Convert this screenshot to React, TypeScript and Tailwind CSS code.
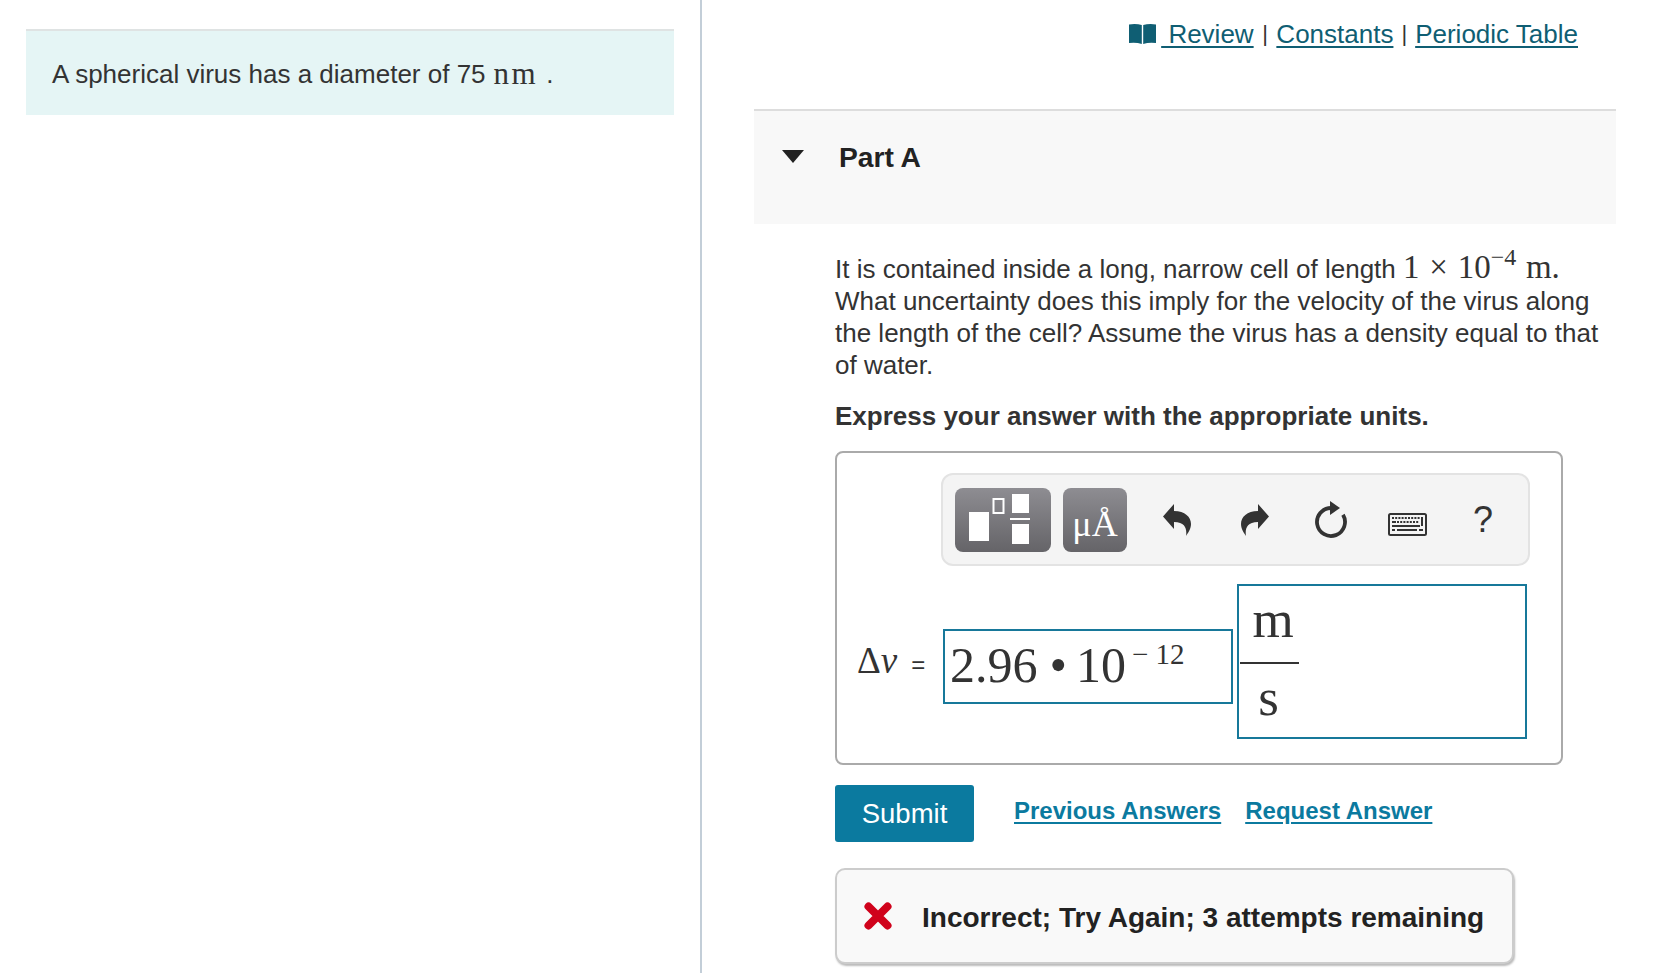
import React from "react";

const sans = "font-['Liberation_Sans',Arial,sans-serif]";
const serif = "font-['Liberation_Serif','Times_New_Roman',serif]";

function FractionIcon() {
  return (
    <svg width="64" height="50" viewBox="0 0 64 50" fill="white" className="mb-[2px] mr-[4px]">
      <rect x="0" y="18" width="20" height="29" />
      <rect x="24.5" y="5" width="10" height="14" fill="none" stroke="white" strokeWidth="2" />
      <rect x="43" y="0" width="17" height="19" />
      <rect x="41" y="24" width="20" height="2" />
      <rect x="43" y="30" width="17" height="20" />
    </svg>
  );
}

function Arrow({ flip }: { flip?: boolean }) {
  return (
    <svg width="28" height="32" viewBox="0 0 28 32" fill="#333" className={flip ? "-scale-x-100" : ""}>
      <path d="M0 12.5 L11 0 V7 C22 7 28 13 28 20 C28 25 25 29 23 32 C24 26 23 18 11 18 V25 Z" />
    </svg>
  );
}

function Reload() {
  return (
    <svg width="34" height="38" viewBox="0 0 34 38" fill="none">
      <path d="M17 7 A14 14 0 1 0 29 13.8" stroke="#333" strokeWidth="3.8" />
      <path d="M16 0 L26 7 L16 14 Z" fill="#333" />
    </svg>
  );
}

function Keyboard() {
  const dots: React.ReactNode[] = [];
  for (let i = 0; i < 9; i++) {
    dots.push(<rect key={"a" + i} x={4 + i * 3.2} y={4} width="2" height="2" fill="#333" />);
  }
  for (let i = 0; i < 7; i++) {
    dots.push(<rect key={"b" + i} x={9 + i * 3.2} y={8} width="2" height="2" fill="#333" />);
  }
  return (
    <svg width="39" height="23" viewBox="0 0 39 23" fill="none">
      <rect x="1" y="1" width="37" height="21" rx="1.5" stroke="#333" strokeWidth="2" />
      {dots}
      <rect x="4" y="8" width="4" height="2" fill="#333" />
      <rect x="33" y="4" width="2" height="9" fill="#333" />
      <rect x="4" y="12" width="28" height="2" fill="#333" />
      <rect x="4" y="16" width="3" height="2" fill="#333" />
      <rect x="9" y="16" width="20" height="2" fill="#333" />
      <rect x="31" y="16" width="4" height="2" fill="#333" />
    </svg>
  );
}

function Book() {
  return (
    <svg width="27" height="20" viewBox="0 0 27 20" fill="#0f5e73">
      <path d="M0 0.5 Q7 -0.5 12.8 1 V20 Q7 18 0 19 Z" />
      <path d="M14.2 1 Q20 -0.5 27 0.5 V19 Q20 18 14.2 20 Z" />
    </svg>
  );
}

export default function App() {
  return (
    <div className={`${sans} flex h-[973px] w-[1668px] overflow-hidden bg-white text-[#333]`}>
      <div className="h-full w-[702px] shrink-0 border-r-2 border-[#c3ced8] pl-[26px] pt-[29px]">
        <div className="flex h-[86px] w-[648px] items-center border-t-2 border-[#dfe3e3] bg-[#e5f5f5] pl-[26px] pt-[2px] text-[26px]">
          <span>A spherical virus has a diameter of 75</span>
          <span className={`${serif} ml-[8px] text-[31px] tracking-[2.5px]`}>nm</span>
          <span className="ml-[8px]">.</span>
        </div>
      </div>

      <div className="w-[966px] pl-[52px]">
        <div className="flex h-[109px] w-[824px] items-start justify-end pt-[16px] text-[26px] leading-[36px]">
          <span className="mr-[5px] mt-[8px]"><Book /></span>
          <a className="text-[#0f5e73] underline underline-offset-[3px]">&nbsp;Review</a>
          <span className="mx-[8.5px] text-[22px]">|</span>
          <a className="text-[#0f5e73] underline underline-offset-[3px]">Constants</a>
          <span className="mx-[8px] text-[22px]">|</span>
          <a className="text-[#0f5e73] underline underline-offset-[3px]">Periodic Table</a>
        </div>

        <div className="flex h-[115px] w-[862px] items-start border-t-2 border-[#dddddd] bg-[#f8f8f8] pl-[28px] pt-[28px]">
          <svg width="22" height="13" viewBox="0 0 22 13" className="mt-[11px]" fill="#222">
            <path d="M0 0 H22 L11 13 Z" />
          </svg>
          <h2 className="ml-[35px] text-[28.2px] font-bold leading-[36px] text-[#222]">Part A</h2>
        </div>

        <div className="ml-[81px] w-[780px] pt-[27px]">
          <p className="text-[26px] leading-[32px]">
            It is contained inside a long, narrow cell of length{" "}
            <span className={`${serif} text-[33px] [word-spacing:1.5px]`}>
              1 × 10<sup className="relative top-[-1px] align-super text-[24px] leading-[0]">−4</sup> m.
            </span>{" "}
            What uncertainty does this imply for the velocity of the virus along the length of the cell? Assume the virus has a density equal to that of water.
          </p>
          <p className="mt-[19px] text-[26px] font-bold leading-[32px]">Express your answer with the appropriate units.</p>

          <div className="mt-[19px] h-[314px] w-[728px] rounded-[8px] border-2 border-[#aaaaaa] pl-[104px] pt-[20px]">
            <div className="flex h-[93px] w-[589px] items-center rounded-[12px] border-2 border-[#e3e3e3] bg-[#f4f4f4] pl-[12px]">
              <div className="flex h-[64px] w-[96px] items-center justify-center rounded-[8px] bg-linear-to-b from-[#8e8d92] to-[#656468]">
                <FractionIcon />
              </div>
              <div className={`${serif} ml-[12px] flex h-[64px] w-[64px] items-end justify-center rounded-[8px] bg-linear-to-b from-[#8e8d92] to-[#656468] pb-[6px] text-[36px] leading-[44px] text-white`}>
                μÅ
              </div>
              <div className="ml-[36px]"><Arrow /></div>
              <div className="ml-[50px]"><Arrow flip /></div>
              <div className="ml-[45px]"><Reload /></div>
              <div className="ml-[40px] mt-[10px]"><Keyboard /></div>
              <span className="ml-[46px] text-[36px] leading-none">?</span>
            </div>

            <div className="relative ml-[2px] mt-[18px] h-[155px]">
              <div className="absolute left-[-86px] top-[53px] flex items-baseline">
                <span className={`${serif} text-[37px] leading-[48px]`}>Δ<i>v</i></span>
                <span className="ml-[14px] text-[24px]">=</span>
              </div>
              <div className={`${serif} absolute left-[0px] top-[45px] flex h-[75px] w-[290px] items-start border-2 border-[#17789a] pl-[5px] text-[50px] leading-[66px]`}>
                <span className="mt-[1px]">2.96</span>
                <span className="ml-[12px] mt-[1px]">•</span>
                <span className="ml-[9px] mt-[1px]">10</span>
                <span className="ml-[6px] mt-[3px] text-[29px] leading-[40px]">− 12</span>
              </div>
              <div className={`${serif} absolute left-[294px] top-[0px] h-[155px] w-[290px] border-2 border-[#17789a] text-[53px]`}>
                <div className="ml-[1px] flex w-[59px] flex-col items-center">
                  <span className="h-[76px] pl-[7px] leading-[66px]">m</span>
                  <span className="h-[2px] w-full bg-[#333]" />
                  <span className="pr-[2px] leading-[66px]">s</span>
                </div>
              </div>
            </div>
          </div>

          <div className="mt-[20px] flex items-start">
            <button className="h-[57px] w-[139px] rounded-[3px] bg-[#0b7a9f] text-[27.5px] text-white">Submit</button>
            <a className="ml-[40px] mt-[10px] text-[24px] font-bold leading-[32px] text-[#0b7a9f] underline underline-offset-[3px]">Previous Answers</a>
            <a className="ml-[24px] mt-[10px] text-[24px] font-bold leading-[32px] text-[#0b7a9f] underline underline-offset-[3px]">Request Answer</a>
          </div>

          <div className="mt-[26px] flex h-[96px] w-[679px] items-center rounded-[10px] border-2 border-[#cccccc] bg-[#f9f9f9] pl-[27px] pt-[3px] shadow-[1px_2px_2px_#bbbbbb]">
            <svg width="28" height="28" viewBox="0 0 28 28" fill="none" className="mb-[3px]">
              <path d="M4.5 4.5 L23.5 23.5 M23.5 4.5 L4.5 23.5" stroke="#d0021b" strokeWidth="8" strokeLinecap="round" />
            </svg>
            <span className="ml-[30px] text-[28px] font-bold leading-[36px] text-[#222]">Incorrect; Try Again; 3 attempts remaining</span>
          </div>
        </div>
      </div>
    </div>
  );
}
